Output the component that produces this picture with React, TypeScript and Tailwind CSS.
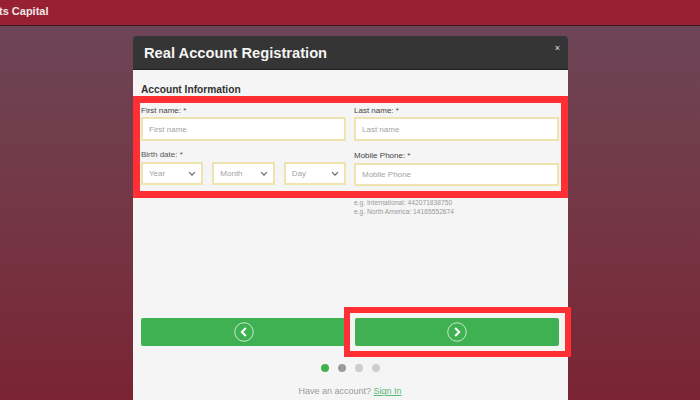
import React from "react";

function Chevron({ dir }: { dir: "left" | "right" }) {
  return (
    <svg width="20" height="20" viewBox="0 0 20 20" fill="none">
      <circle cx="10" cy="10" r="9.25" stroke="#ffffff" strokeOpacity="0.8" strokeWidth="0.9" />
      <path
        d={dir === "left" ? "M11.8 6 L7.8 10 L11.8 14" : "M8.2 6 L12.2 10 L8.2 14"}
        stroke="#ffffff"
        strokeWidth="2"
        fill="none"
      />
    </svg>
  );
}

function Field({ label, placeholder, className, boxClass }: { label: string; placeholder: string; className?: string; boxClass: string }) {
  return (
    <div className={className}>
      <div className="h-[13px] text-[8px] leading-[13px] text-[#444444]">{label}</div>
      <div className={`flex items-center border-2 border-[#efe3ae] bg-white pl-[6px] text-[8px] text-[#a3a3a3] ${boxClass}`}>
        {placeholder}
      </div>
    </div>
  );
}

function SelectBox({ label }: { label: string }) {
  return (
    <div className="flex h-[23px] flex-1 items-center justify-between border-2 border-[#efe3ae] bg-white pl-[6px] pr-[5px] text-[8px] text-[#a3a3a3]">
      <span>{label}</span>
      <svg width="8" height="6" viewBox="0 0 8 6" fill="none">
        <path d="M1 1.2 L4 4.2 L7 1.2" stroke="#666666" strokeWidth="1.2" />
      </svg>
    </div>
  );
}

export default function App() {
  return (
    <div className="relative h-[400px] w-[700px] overflow-hidden bg-gradient-to-b from-[#6b4759] to-[#7a2333] font-['Liberation_Sans',Arial,sans-serif]">
      <div className="flex h-[26px] items-start border-b border-[#3a1a1f] bg-[#982033]">
        <span className="mt-[5px] -ml-[1px] text-[11px] font-bold leading-[13px] text-[#f2e6e6]">ts Capital</span>
      </div>

      <div className="relative ml-[133px] mt-[10px] h-[400px] w-[435px] overflow-hidden rounded-t-[4px]">
        <div className="flex h-[34px] items-center justify-between border-b border-[#222222] bg-[#353535] pl-[11px] pr-[8px]">
          <span className="text-[14.7px] font-bold leading-[20px] text-[#f4f4f4]">Real Account Registration</span>
          <span className="-mt-[10px] text-[9px] leading-[10px] text-[#e5e5e5]">×</span>
        </div>

        <div className="h-[330px] bg-[#f5f5f5] pl-[8px] pr-[9px]">
          <div className="pt-[13px] text-[10.2px] font-bold leading-[13px] text-[#333333]">Account Information</div>

          <div className="mt-[8px] grid grid-cols-2 gap-x-[8px]">
            <Field label="First name: *" placeholder="First name" boxClass="h-[24px] pt-[1px]" />
            <Field label="Last name: *" placeholder="Last name" boxClass="h-[24px] pt-[1px]" />
          </div>

          <div className="mt-[7px] grid grid-cols-2 gap-x-[8px]">
            <div>
              <div className="h-[13px] text-[8px] leading-[13px] text-[#555555]">Birth date: *</div>
              <div className="mt-[1px] flex gap-[9px]">
                <SelectBox label="Year" />
                <SelectBox label="Month" />
                <SelectBox label="Day" />
              </div>
            </div>
            <div>
              <Field label="Mobile Phone: *" placeholder="Mobile Phone" className="mt-[1px]" boxClass="mt-[1px] h-[23px]" />
              <div className="mt-[12px] text-[6.7px] leading-[9px] text-[#9a9a9a]">
                <div>e.g. International: 442071838750</div>
                <div>e.g. North America: 14165552674</div>
              </div>
            </div>
          </div>

          <div className="mt-[102px] flex h-[28px] gap-[9px]">
            <div className="flex w-[205px] items-center justify-center rounded-l-[2px] bg-[#3fb153]">
              <Chevron dir="left" />
            </div>
            <div className="flex w-[204px] items-center justify-center rounded-[2px] bg-[#3fb153]">
              <Chevron dir="right" />
            </div>
          </div>

          <div className="mt-[18px] flex justify-center gap-[9px] pl-[1px]">
            <span className="h-[8px] w-[8px] rounded-full bg-[#3fb153]" />
            <span className="h-[8px] w-[8px] rounded-full bg-[#9b9b9b]" />
            <span className="h-[8px] w-[8px] rounded-full bg-[#cccccc]" />
            <span className="h-[8px] w-[8px] rounded-full bg-[#cccccc]" />
          </div>

          <div className="mt-[13px] text-center text-[9px] leading-[12px] text-[#9a9a9a]">
            Have an account? <span className="text-[#5cb878] underline">Sign In</span>
          </div>
        </div>
      </div>

      <div className="absolute left-[133px] top-[96px] h-[102px] w-[435px] border-[7px] border-[#ff2f33]" />
      <div className="absolute left-[344px] top-[307px] h-[50px] w-[227px] border-[6px] border-[#ff2f33]" />
    </div>
  );
}
